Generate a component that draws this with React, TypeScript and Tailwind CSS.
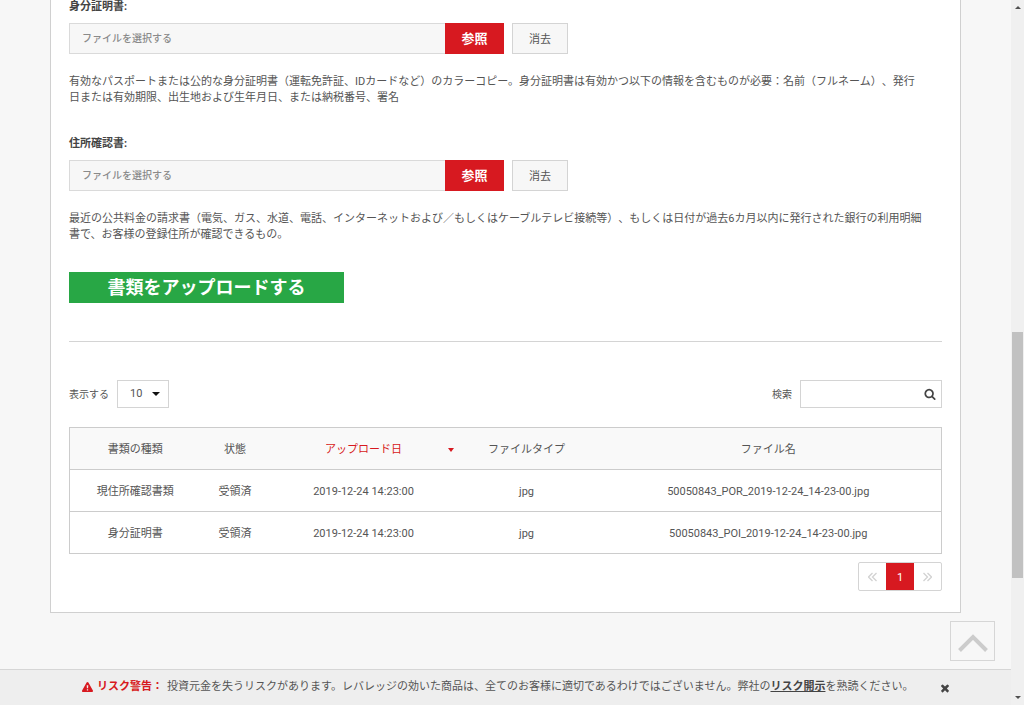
import { ReactNode } from 'react';

const columns = [
  { label: '書類の種類', width: 'w-[131px]' },
  { label: '状態', width: 'w-[69px]' },
  { label: 'アップロード日', width: 'w-[188px]', sorted: true },
  { label: 'ファイルタイプ', width: 'w-[138px]' },
  { label: 'ファイル名', width: 'w-auto' },
];

const documents = [
  ['現住所確認書類', '受領済', '2019-12-24 14:23:00', 'jpg', '50050843_POR_2019-12-24_14-23-00.jpg'],
  ['身分証明書', '受領済', '2019-12-24 14:23:00', 'jpg', '50050843_POI_2019-12-24_14-23-00.jpg'],
];

function SearchIcon() {
  return (
    <svg aria-hidden="true" viewBox="0 0 1792 1792" className="size-3" fill="currentColor">
      <path d="M1216 832q0-185-131.5-316.5t-316.5-131.5-316.5 131.5-131.5 316.5 131.5 316.5 316.5 131.5 316.5-131.5 131.5-316.5zm512 832q0 52-38 90t-90 38q-54 0-90-38l-343-342q-179 124-399 124-143 0-273.5-55.5t-225-150-150-225-55.5-273.5 55.5-273.5 150-225 225-150 273.5-55.5 273.5 55.5 225 150 150 225 55.5 273.5q0 220-124 399l343 343q37 37 37 90z" />
    </svg>
  );
}

function CloseIcon() {
  return (
    <svg aria-hidden="true" viewBox="0 0 1792 1792" className="size-3" fill="currentColor">
      <path d="M1490 1322q0 40-28 68l-136 136q-28 28-68 28t-68-28l-294-294-294 294q-28 28-68 28t-68-28l-136-136q-28-28-28-68t28-68l294-294-294-294q-28-28-28-68t28-68l136-136q28-28 68-28t68 28l294 294 294-294q28-28 68-28t68 28l136 136q28 28 28 68t-28 68l-294 294 294 294q28 28 28 68z" />
    </svg>
  );
}

function WarningIcon() {
  return (
    <svg aria-hidden="true" viewBox="0 0 22 22" className="size-[11px]" fill="currentColor">
      <path
        fillRule="evenodd"
        d="M11 0q1.200 0 1.800 1l9 16.200q.500.900 0 1.800T20.200 20H1.800Q.700 20 .200 19t0-1.800L9.200 1Q9.800 0 11 0ZM9.400 6.500l.4 6h2.400l.4-6ZM9.700 14.300v2.600h2.600v-2.600Z"
      />
    </svg>
  );
}

function DoubleChevron({ right = false }: { right?: boolean }) {
  return (
    <svg aria-hidden="true" viewBox="0 0 9 10" className="h-[10px] w-[9px]" fill="none" stroke="#d2d2d2" strokeWidth="1.300">
      <path d={right ? 'M.5 1l4 4-4 4M4.500 1l4 4-4 4' : 'M4.500 1l-4 4 4 4M8.500 1l-4 4 4 4'} />
    </svg>
  );
}

function UploadField({ id, label, children }: { id: string; label: string; children: ReactNode }) {
  return (
    <div>
      <label htmlFor={id} className="block text-[11px] leading-[14px] font-bold text-[#444]">
        {label}
      </label>
      <div className="mt-[9px] flex h-[31px]">
        <input
          id={id}
          type="text"
          readOnly
          placeholder="ファイルを選択する"
          className="w-[376px] min-w-0 border border-r-0 border-[#dadada] bg-[#f7f7f7] px-3 text-[10px] font-medium placeholder:text-[#8a8a8a]"
        />
        <button type="button" className="w-[59px] shrink-0 bg-[#d71920] text-[13px] font-bold text-white">
          参照
        </button>
        <button type="button" className="ml-2 w-14 shrink-0 border border-[#d4d4d4] bg-[#f7f7f7] pt-[3px] text-[11px]">
          消去
        </button>
      </div>
      <p className="mt-5 text-[11px] leading-4">{children}</p>
    </div>
  );
}

function DocumentsTable() {
  return (
    <table className="mt-[19px] w-full table-fixed border-collapse border border-[#cccccc] text-center text-[11px]">
      <thead>
        <tr className="h-[42px] bg-[#f9f9f9]">
          {columns.map((c) => (
            <th
              key={c.label}
              scope="col"
              aria-sort={c.sorted ? 'descending' : undefined}
              className={`${c.width} px-0 pt-[3px] pb-0 font-normal`}
            >
              {c.sorted ? (
                <button type="button" className="relative w-full text-[#d71920]">
                  {c.label}
                  <svg aria-hidden="true" viewBox="0 0 6 4" className="absolute inset-y-0 right-1 my-auto h-1 w-1.5">
                    <path d="M0 0h6L3 4z" fill="currentColor" />
                  </svg>
                </button>
              ) : (
                c.label
              )}
            </th>
          ))}
        </tr>
      </thead>
      <tbody>
        {documents.map((row) => (
          <tr key={row[4]} className="h-[42px] border-t border-[#cccccc]">
            {row.map((cell, i) => (
              <td key={i} className="px-0 pt-[3px] pb-0">
                {cell}
              </td>
            ))}
          </tr>
        ))}
      </tbody>
    </table>
  );
}

function Pagination() {
  return (
    <nav aria-label="ページ" className="mt-2 flex justify-end">
      <div className="flex h-[29px] overflow-hidden rounded-xs border border-[#d4d4d4] text-[11px]">
        <button type="button" aria-label="前へ" className="flex w-[27px] items-center justify-center">
          <DoubleChevron />
        </button>
        <button type="button" aria-current="page" className="-my-px w-7 bg-[#d71920] pt-[3px] text-white">
          1
        </button>
        <button type="button" aria-label="次へ" className="flex w-[27px] items-center justify-center">
          <DoubleChevron right />
        </button>
      </div>
    </nav>
  );
}

function RiskBar() {
  return (
    <footer className="flex h-9 shrink-0 items-center border-t border-[#d6d6d6] bg-[#eeeeee] pl-[82px] text-[11px]">
      <span className="flex items-center gap-1 font-bold text-[#d71920]">
        <WarningIcon />
        リスク警告：
      </span>
      <p className="ml-1 whitespace-nowrap">
        投資元金を失うリスクがあります。レバレッジの効いた商品は、全てのお客様に適切であるわけではございません。弊社の
        <a href="#risk" className="font-bold text-[#444] underline">
          リスク開示
        </a>
        を熟読ください。
      </p>
      <button type="button" aria-label="閉じる" className="ml-[26px] text-[#444]">
        <CloseIcon />
      </button>
    </footer>
  );
}

function ScrollTrack() {
  return (
    <div aria-hidden="true" className="flex w-[13px] shrink-0 flex-col items-center bg-[#f0f0f0] py-1.5">
      <svg viewBox="0 0 6 3" className="h-[3px] w-1.5">
        <path d="M0 3h6L3 0z" fill="#505050" />
      </svg>
      <div className="flex w-full flex-1 flex-col px-px">
        <div className="flex-[323]" />
        <div className="flex-[246] bg-[#c1c1c1]" />
        <div className="flex-[118]" />
      </div>
      <svg viewBox="0 0 6 3" className="h-[3px] w-1.5">
        <path d="M0 0h6L3 3z" fill="#505050" />
      </svg>
    </div>
  );
}

export default function App() {
  return (
    <div className="flex h-screen bg-[#f7f7f7] font-['Roboto','Noto_Sans_CJK_JP',sans-serif] text-[#555] [text-spacing-trim:space-all]">
      <div className="relative flex min-w-0 flex-1 flex-col">
        <main className="min-h-0 flex-1 overflow-hidden px-[50px]">
          <div className="border border-t-0 border-[#d0d0d0] bg-white px-[18px] pb-[21px]">
            <form onSubmit={(e) => e.preventDefault()}>
              <div className="flex flex-col gap-[31px]">
                <UploadField id="identity" label="身分証明書:">
                  有効なパスポートまたは公的な身分証明書（運転免許証、IDカードなど）のカラーコピー。身分証明書は有効かつ以下の情報を含むものが必要：名前（フルネーム）、発行
                  <br />
                  日または有効期限、出生地および生年月日、または納税番号、署名
                </UploadField>
                <UploadField id="residence" label="住所確認書:">
                  最近の公共料金の請求書（電気、ガス、水道、電話、インターネットおよび／もしくはケーブルテレビ接続等）、もしくは日付が過去6カ月以内に発行された銀行の利用明細
                  <br />
                  書で、お客様の登録住所が確認できるもの。
                </UploadField>
              </div>
              <button
                type="submit"
                className="mt-[29px] block h-[31px] w-[275px] bg-[#28a745] text-lg leading-none font-bold text-white"
              >
                書類をアップロードする
              </button>
            </form>

            <hr className="mt-[38px] border-[#d4d4d4]" />

            <div className="mt-[38px] flex items-center justify-between text-[10px]">
              <div className="flex items-center gap-2">
                <label htmlFor="page-size">表示する</label>
                <div className="relative">
                  <select
                    id="page-size"
                    defaultValue="10"
                    className="block h-7 w-[52px] appearance-none border border-[#d4d4d4] bg-white pt-px pl-3 text-[11px]"
                  >
                    <option>10</option>
                    <option>25</option>
                    <option>50</option>
                  </select>
                  <svg
                    aria-hidden="true"
                    viewBox="0 0 8 4"
                    className="pointer-events-none absolute inset-y-0 right-[9px] my-auto h-1 w-2"
                  >
                    <path d="M0 0h8L4 4z" fill="#111" />
                  </svg>
                </div>
              </div>
              <div className="flex items-center gap-2">
                <label htmlFor="search">検索</label>
                <div className="flex h-7 w-[142px] items-center border border-[#d4d4d4] pr-[5px] text-[#444]">
                  <input id="search" type="text" className="min-w-0 flex-1 px-2 outline-none" />
                  <SearchIcon />
                </div>
              </div>
            </div>

            <DocumentsTable />
            <Pagination />
          </div>
        </main>

        <button
          type="button"
          aria-label="トップへ戻る"
          className="absolute right-4 bottom-11 flex h-10 w-[45px] items-center justify-center border border-[#d6d6d6] bg-[#f7f7f7]"
        >
          <svg aria-hidden="true" viewBox="0 0 30 18" className="mt-1 h-[18px] w-[30px]" fill="none" stroke="#cccccc" strokeWidth="4">
            <path d="M1.500 16.500L15 3l13.500 13.500" />
          </svg>
        </button>
        <RiskBar />
      </div>
      <ScrollTrack />
    </div>
  );
}
